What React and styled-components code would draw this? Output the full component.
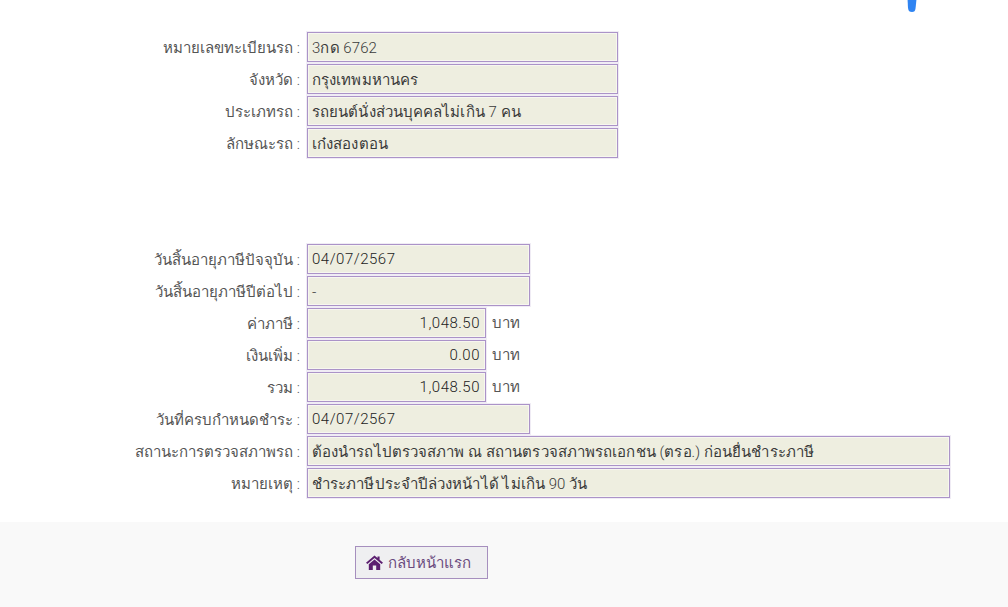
import React from 'react';
import styled, { createGlobalStyle } from 'styled-components';

const GlobalStyle = createGlobalStyle`
  html, body {
    margin: 0;
    padding: 0;
    background: #fff;
    overflow: hidden;
  }

  body {
    font-family: Roboto, "Noto Sans", "Liberation Sans", "DejaVu Sans", sans-serif;
    font-size: 15px;
    font-weight: 300;
    color: #555;
  }
`;

const Page = styled.div`
  position: relative;
  width: 1008px;
  height: 607px;
  display: flex;
  flex-direction: column;
  overflow: hidden;
`;

const Content = styled.div`
  height: 522px;
  box-sizing: border-box;
  padding-top: 32px;
  display: flex;
  flex-direction: column;
  gap: 86px;
`;

const Section = styled.div`
  display: flex;
  flex-direction: column;
  gap: 2px;
`;

const Row = styled.div`
  display: flex;
  align-items: center;
  height: 30px;
`;

const Label = styled.div`
  width: 300px;
  flex: none;
  padding-top: 2px;
  padding-right: 1px;
  text-align: right;
  white-space: nowrap;
`;

const Field = styled.div`
  width: ${({ $width }) => $width}px;
  height: 30px;
  flex: none;
  box-sizing: border-box;
  margin-left: 6px;
  padding: 0 5px 0 4px;
  border: 1px solid #ab93c8;
  background: #eeeee0;
  box-shadow: inset 0 0 0 1px #f7f7ef, 0 0 0 1px rgba(171, 147, 200, 0.18);
  color: ${({ $numeric }) => ($numeric ? '#222' : '#3a3a3a')};
  line-height: ${({ $numeric }) => ($numeric ? '29px' : '31px')};
  letter-spacing: ${({ $numeric }) => ($numeric ? '0.5px' : '0.09px')};
  text-align: ${({ $right }) => ($right ? 'right' : 'left')};
  white-space: nowrap;
`;

const Unit = styled.span`
  margin-left: 6px;
`;

const Footer = styled.div`
  flex: 1;
  background: #f9f9f9;
  padding: 24px 0 0 355px;
`;

const HomeButton = styled.a`
  display: flex;
  align-items: center;
  gap: 5px;
  width: 133px;
  height: 33px;
  box-sizing: border-box;
  padding-left: 10px;
  border: 1px solid #a68fbe;
  background: #efeff1;
  color: #6a4a7e;
  cursor: pointer;
`;

const BlueMark = styled.svg`
  position: absolute;
  top: 0;
  left: 905px;
`;

const Mark = () => (
  <BlueMark width="13" height="13" viewBox="0 0 13 13" aria-hidden="true">
    <path d="M2.6 0 L11.4 0 L10.6 8 C10.3 11 9.2 12 7 12 C4.6 12 3.4 11 3 8 Z" fill="#2f84f2" />
  </BlueMark>
);

const HomeIcon = () => (
  <svg width="17" height="15" viewBox="0 0 17 15" aria-hidden="true">
    <path
      d="M8.5 0.4 L11.5 3 L11.5 1.4 L13.6 1.4 L13.6 4.8 L17 7.8 L15.6 9 L8.5 3 L1.4 9 L0 7.8 Z M2.8 9.2 L8.5 4.4 L14.2 9.2 L14.2 15 L10.2 15 L10.2 10.6 L6.8 10.6 L6.8 15 L2.8 15 Z"
      fill="#5c1f70"
    />
  </svg>
);

const vehicle = [
  { label: 'หมายเลขทะเบียนรถ :', value: '3กด 6762', width: 311 },
  { label: 'จังหวัด :', value: 'กรุงเทพมหานคร', width: 311 },
  { label: 'ประเภทรถ :', value: 'รถยนต์นั่งส่วนบุคคลไม่เกิน 7 คน', width: 311 },
  { label: 'ลักษณะรถ :', value: 'เก๋งสองตอน', width: 311 },
];

const tax = [
  { label: 'วันสิ้นอายุภาษีปัจจุบัน :', value: '04/07/2567', width: 223, numeric: true },
  { label: 'วันสิ้นอายุภาษีปีต่อไป :', value: '-', width: 223 },
  { label: 'ค่าภาษี :', value: '1,048.50', width: 179, right: true, numeric: true, unit: 'บาท' },
  { label: 'เงินเพิ่ม :', value: '0.00', width: 179, right: true, numeric: true, unit: 'บาท' },
  { label: 'รวม :', value: '1,048.50', width: 179, right: true, numeric: true, unit: 'บาท' },
  { label: 'วันที่ครบกำหนดชำระ :', value: '04/07/2567', width: 223, numeric: true },
  { label: 'สถานะการตรวจสภาพรถ :', value: 'ต้องนำรถไปตรวจสภาพ ณ สถานตรวจสภาพรถเอกชน (ตรอ.) ก่อนยื่นชำระภาษี', width: 643 },
  { label: 'หมายเหตุ :', value: 'ชำระภาษีประจำปีล่วงหน้าได้ ไม่เกิน 90 วัน', width: 643 },
];

const renderRow = (row) => (
  <Row key={row.label}>
    <Label>{row.label}</Label>
    <Field $width={row.width} $right={row.right} $numeric={row.numeric}>{row.value}</Field>
    {row.unit && <Unit>{row.unit}</Unit>}
  </Row>
);

const App = () => (
  <Page>
    <GlobalStyle />
    <Mark />
    <Content>
      <Section>{vehicle.map(renderRow)}</Section>
      <Section>{tax.map(renderRow)}</Section>
    </Content>
    <Footer>
      <HomeButton>
        <HomeIcon />
        กลับหน้าแรก
      </HomeButton>
    </Footer>
  </Page>
);

export default App;
